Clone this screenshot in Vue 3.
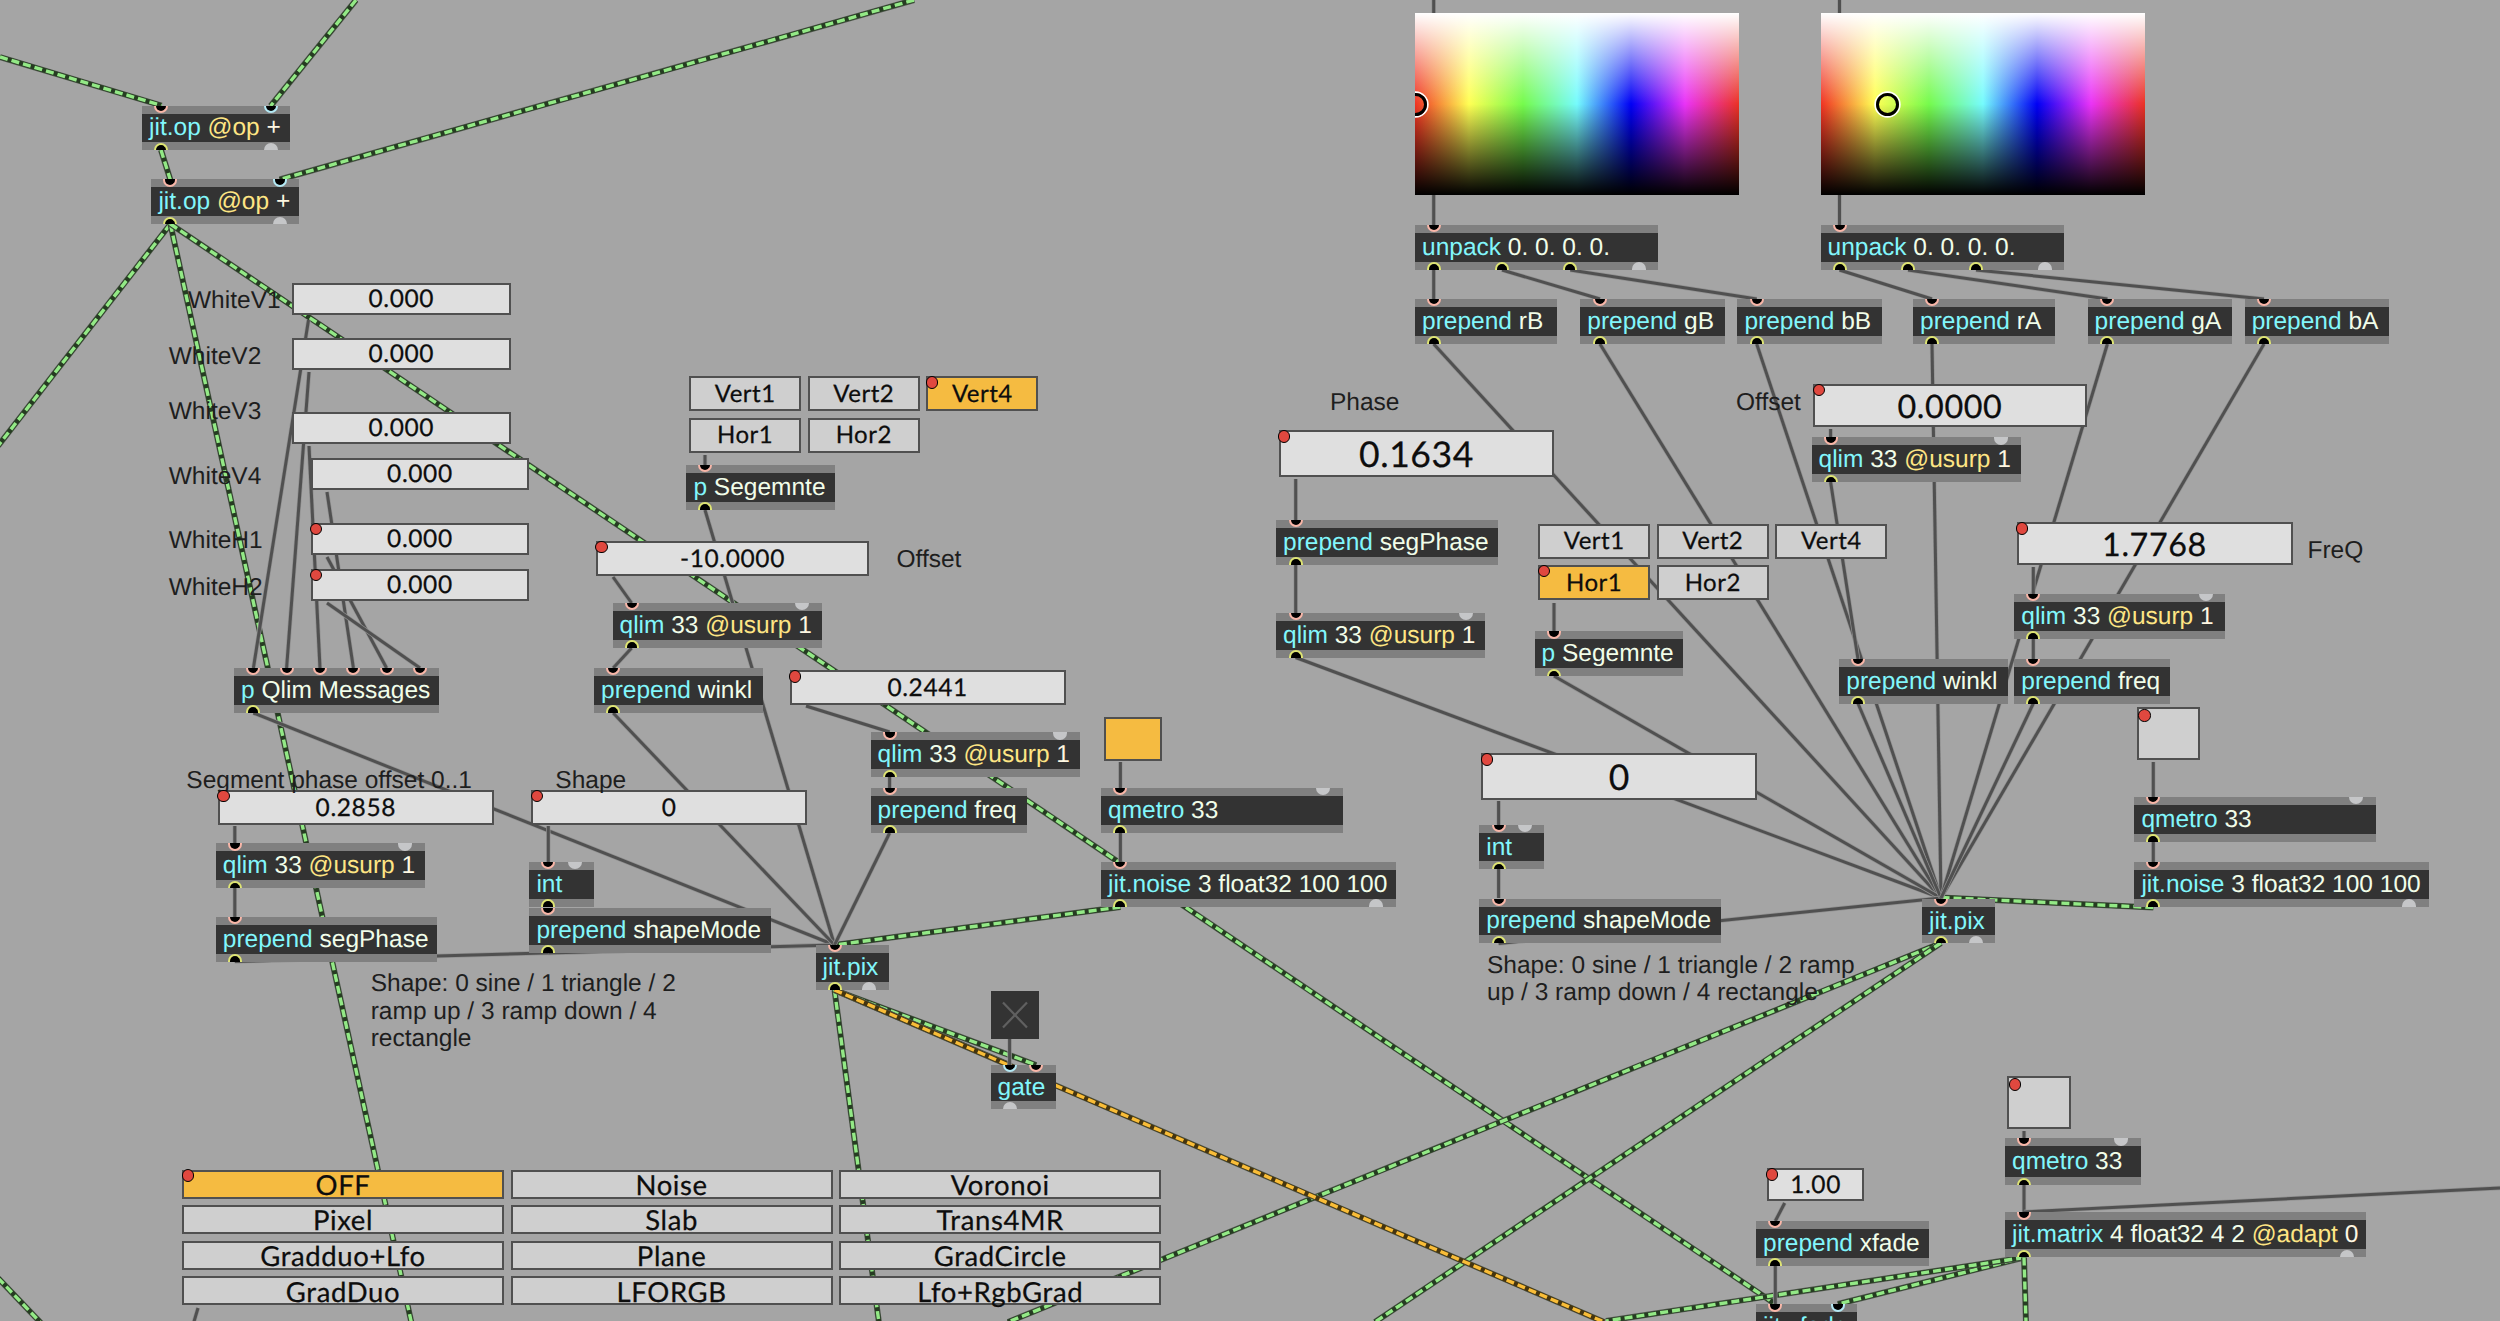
<script setup>
// object boxes: text, left, top, width, inlets and outlets as [x, kind]
const objects = [
  { text: 'jit.op @op +', x: 142, y: 105.5, w: 148, ins: [[161, 'hot'], [270.6, 'cold']], outs: [[161, 'out'], [270.6, 'idle']] },
  { text: 'jit.op @op +', x: 151.4, y: 179.3, w: 148, ins: [[170.4, 'hot'], [279.8, 'cold']], outs: [[170.4, 'out'], [279.8, 'idle']] },
  { text: 'p Qlim Messages', x: 234, y: 668, w: 205, ins: [[253.4, 'hot'], [286.6, 'hot'], [320, 'hot'], [353.4, 'hot'], [386.6, 'hot'], [420, 'hot']], outs: [[253.4, 'out']] },
  { text: 'qlim 33 @usurp 1', x: 215.8, y: 843.3, w: 209, ins: [[234.8, 'hot'], [405.3, 'idle']], outs: [[234.8, 'out']] },
  { text: 'prepend segPhase', x: 215.8, y: 917, w: 221.3, ins: [[234.8, 'hot']], outs: [[234.8, 'out']] },
  { text: 'int', x: 529.4, y: 862, w: 65, ins: [[548.3, 'hot'], [574.7, 'idle']], outs: [[548.3, 'out']] },
  { text: 'prepend shapeMode', x: 529.4, y: 908, w: 241.3, ins: [[548.3, 'hot']], outs: [[548.3, 'out']] },
  { text: 'p Segemnte', x: 686.4, y: 465, w: 148.2, ins: [[705, 'hot']], outs: [[705, 'out']] },
  { text: 'qlim 33 @usurp 1', x: 612.5, y: 603, w: 209, ins: [[631.6, 'hot'], [801.8, 'idle']], outs: [[631.6, 'out']] },
  { text: 'prepend winkl', x: 594, y: 668, w: 168.5, ins: [[613.2, 'hot']], outs: [[613.2, 'out']] },
  { text: 'qlim 33 @usurp 1', x: 870.6, y: 732.3, w: 209, ins: [[889.6, 'hot'], [1060, 'idle']], outs: [[889.6, 'out']] },
  { text: 'prepend freq', x: 870.6, y: 788, w: 156.2, ins: [[889.6, 'hot']], outs: [[889.6, 'out']] },
  { text: 'qmetro 33', x: 1101, y: 788, w: 242, ins: [[1120.4, 'hot'], [1323, 'idle']], outs: [[1120.4, 'out']] },
  { text: 'jit.noise 3 float32 100 100', x: 1101, y: 862, w: 294.5, ins: [[1120.4, 'hot']], outs: [[1120.4, 'out'], [1375.8, 'idle']] },
  { text: 'jit.pix', x: 815.5, y: 945, w: 73, ins: [[834.5, 'hot']], outs: [[834.5, 'out'], [868.5, 'idle']] },
  { text: 'gate', x: 990.6, y: 1064.7, w: 65, ins: [[1009.6, 'cold'], [1036, 'hot']], outs: [[1009.6, 'idle']] },
  { text: 'unpack 0. 0. 0. 0.', x: 1415, y: 225, w: 243, ins: [[1433.7, 'hot']], outs: [[1433.7, 'out'], [1502, 'out'], [1570.3, 'out'], [1638.6, 'idle']] },
  { text: 'unpack 0. 0. 0. 0.', x: 1820.5, y: 225, w: 243, ins: [[1839.5, 'hot']], outs: [[1839.5, 'out'], [1908, 'out'], [1976, 'out'], [2044.5, 'idle']] },
  { text: 'prepend rB', x: 1415, y: 299, w: 142, ins: [[1433.7, 'hot']], outs: [[1433.7, 'out']] },
  { text: 'prepend gB', x: 1580.3, y: 299, w: 144.5, ins: [[1600, 'hot']], outs: [[1600, 'out']] },
  { text: 'prepend bB', x: 1737.4, y: 299, w: 144.5, ins: [[1756.7, 'hot']], outs: [[1756.7, 'out']] },
  { text: 'prepend rA', x: 1913, y: 299, w: 142, ins: [[1932, 'hot']], outs: [[1932, 'out']] },
  { text: 'prepend gA', x: 2087.6, y: 299, w: 144.5, ins: [[2107.4, 'hot']], outs: [[2107.4, 'out']] },
  { text: 'prepend bA', x: 2244.7, y: 299, w: 144, ins: [[2264, 'hot']], outs: [[2264, 'out']] },
  { text: 'prepend segPhase', x: 1276, y: 520, w: 221.5, ins: [[1295.7, 'hot']], outs: [[1295.7, 'out']] },
  { text: 'qlim 33 @usurp 1', x: 1276, y: 613, w: 209.4, ins: [[1295.7, 'hot'], [1466, 'idle']], outs: [[1295.7, 'out']] },
  { text: 'p Segemnte', x: 1534.6, y: 631.3, w: 148, ins: [[1554, 'hot']], outs: [[1554, 'out']] },
  { text: 'int', x: 1479.3, y: 824.7, w: 65, ins: [[1498.6, 'hot'], [1525, 'idle']], outs: [[1498.6, 'out']] },
  { text: 'prepend shapeMode', x: 1479.3, y: 898.5, w: 241.7, ins: [[1498.6, 'hot']], outs: [[1498.6, 'out']] },
  { text: 'qlim 33 @usurp 1', x: 1811.5, y: 437.3, w: 209, ins: [[1830.6, 'hot'], [2001, 'idle']], outs: [[1830.6, 'out']] },
  { text: 'qlim 33 @usurp 1', x: 2014.3, y: 594, w: 211, ins: [[2033.3, 'hot'], [2205.8, 'idle']], outs: [[2033.3, 'out']] },
  { text: 'prepend winkl', x: 1839.3, y: 659, w: 168.4, ins: [[1858, 'hot']], outs: [[1858, 'out']] },
  { text: 'prepend freq', x: 2014.3, y: 659, w: 156.2, ins: [[2033.3, 'hot']], outs: [[2033.3, 'out']] },
  { text: 'qmetro 33', x: 2134.4, y: 797, w: 241.5, ins: [[2153.3, 'hot'], [2356, 'idle']], outs: [[2153.3, 'out']] },
  { text: 'jit.noise 3 float32 100 100', x: 2134.4, y: 862, w: 294.3, ins: [[2153.3, 'hot']], outs: [[2153.3, 'out'], [2409, 'idle']] },
  { text: 'jit.pix', x: 1922, y: 898.7, w: 73, ins: [[1941, 'hot']], outs: [[1941, 'out'], [1976, 'idle']] },
  { text: 'qmetro 33', x: 2005, y: 1138.3, w: 136, h: 46.7, ins: [[2024, 'hot'], [2121.4, 'idle']], outs: [[2024, 'out']] },
  { text: 'jit.matrix 4 float32 4 2 @adapt 0', x: 2005, y: 1212.3, w: 361, ins: [[2024, 'hot']], outs: [[2024, 'out'], [2347, 'idle']] },
  { text: 'prepend xfade', x: 1756, y: 1221, w: 172.6, ins: [[1775.3, 'hot']], outs: [[1775.3, 'out']] },
  { text: 'jit.xfade', x: 1756, y: 1304.3, w: 101, ins: [[1775.3, 'hot'], [1838, 'cold']], outs: [] }
]

const numbers = [
  { value: '0.000', x: 291.8, y: 283, w: 219, h: 32 },
  { value: '0.000', x: 291.8, y: 338, w: 219, h: 32 },
  { value: '0.000', x: 291.8, y: 412, w: 219, h: 32 },
  { value: '0.000', x: 310.6, y: 458, w: 218.6, h: 32 },
  { value: '0.000', x: 310.6, y: 522.7, w: 218.6, h: 32, dot: true },
  { value: '0.000', x: 310.6, y: 569, w: 218.6, h: 32, dot: true },
  { value: '0.2858', x: 218, y: 790, w: 275.6, h: 34.5, dot: true },
  { value: '0', x: 531.4, y: 790, w: 275.6, h: 34.5, dot: true },
  { value: '-10.0000', x: 596, y: 541, w: 273, h: 34.7, dot: true },
  { value: '0.2441', x: 789.6, y: 670.3, w: 276, h: 34.3, dot: true },
  { value: '0.1634', x: 1278.6, y: 430.3, w: 275.7, h: 46.7, size: 'large', dot: true },
  { value: '0', x: 1481.4, y: 753.3, w: 275.7, h: 46.5, size: 'large', dot: true },
  { value: '0.0000', x: 1813.4, y: 384, w: 273.2, h: 42.7, size: 'medium', dot: true },
  { value: '1.7768', x: 2016.5, y: 522.3, w: 276, h: 42.7, size: 'medium', dot: true },
  { value: '1.00', x: 1766.8, y: 1168.3, w: 97.5, h: 32.4, dot: true }
]

const tabs = [
  { x: 689, y: 376, size: 'small', active: 'Vert4', items: ['Vert1', 'Vert2', 'Vert4', 'Hor1', 'Hor2'] },
  { x: 1538, y: 523.5, size: 'small', active: 'Hor1', items: ['Vert1', 'Vert2', 'Vert4', 'Hor1', 'Hor2'] },
  {
    x: 182, y: 1169.5, size: 'wide', active: 'OFF',
    items: ['OFF', 'Noise', 'Voronoi', 'Pixel', 'Slab', 'Trans4MR', 'Gradduo+Lfo', 'Plane', 'GradCircle', 'GradDuo', 'LFORGB', 'Lfo+RgbGrad']
  }
]

const buttons = [
  { x: 1103.7, y: 716.5, w: 58, h: 44.5, on: true },
  { x: 2136.6, y: 707.3, w: 63.8, h: 53, dot: true },
  { x: 2007, y: 1076.3, w: 64.4, h: 52.7, dot: true }
]

const comments = [
  { lines: ['WhiteV1'], x: 188, y: 301 },
  { lines: ['WhiteV2'], x: 168.7, y: 356.5 },
  { lines: ['WhiteV3'], x: 168.7, y: 411.5 },
  { lines: ['WhiteV4'], x: 168.7, y: 476.3 },
  { lines: ['WhiteH1'], x: 168.7, y: 540.5 },
  { lines: ['WhiteH2'], x: 168.7, y: 587.3 },
  { lines: ['Segment phase offset 0..1'], x: 186.3, y: 780.5 },
  { lines: ['Shape'], x: 555.3, y: 780.5 },
  { lines: ['Shape: 0 sine / 1 triangle / 2', 'ramp up / 3 ramp down / 4', 'rectangle'], x: 370.7, y: 984 },
  { lines: ['Offset'], x: 896.5, y: 559.5 },
  { lines: ['Phase'], x: 1330, y: 402.5 },
  { lines: ['Offset'], x: 1736, y: 402.5 },
  { lines: ['FreQ'], x: 2307.5, y: 550.3 },
  { lines: ['Shape: 0 sine / 1 triangle / 2 ramp', 'up / 3 ramp down / 4 rectangle'], x: 1487, y: 965.5 }
]

const pickers = [
  { x: 1415, mark: 0 },
  { x: 1820.7, mark: 66.5 }
]

// patch cords as x1, y1, x2, y2
const cords = [
  [308.5, 320, 253.4, 668], [309, 372, 286.6, 668], [309, 446, 320, 668],
  [327, 492, 353.4, 668], [327, 557, 386.6, 668], [327, 603, 420, 668],
  [253.4, 713, 834.5, 945],
  [234.8, 826, 234.8, 843], [234.8, 888, 234.8, 917], [234.8, 961.5, 834.5, 945],
  [548.3, 826, 548.3, 862], [548.3, 953, 834.5, 945],
  [705, 455, 705, 465], [705, 510, 834.5, 945],
  [613, 577, 631.6, 603], [631.6, 648, 613.2, 668], [613.2, 713, 834.5, 945],
  [806, 706, 889.6, 732], [889.6, 777, 889.6, 788], [889.6, 833, 834.5, 945],
  [1120.4, 762, 1120.4, 788], [1120.4, 833, 1120.4, 862],
  [1009.6, 1039, 1009.6, 1065],
  [1433.7, 0, 1433.7, 225], [1839.5, 0, 1839.5, 225],
  [1433.7, 270, 1433.7, 299], [1502, 270, 1600, 299], [1570.3, 270, 1756.7, 299],
  [1839.5, 270, 1932, 299], [1908, 270, 2107.4, 299], [1976, 270, 2264, 299],
  [1433.7, 344, 1941, 898], [1600, 344, 1941, 898], [1756.7, 344, 1941, 898],
  [1932, 344, 1941, 898], [2107.4, 344, 1941, 898], [2264, 344, 1941, 898],
  [1295.7, 479, 1295.7, 520], [1295.7, 565, 1295.7, 613], [1295.7, 657.5, 1941, 898],
  [1554, 603, 1554, 631], [1554, 676, 1941, 898],
  [1498.6, 801, 1498.6, 825], [1498.6, 869, 1498.6, 898], [1498.6, 943.5, 1941, 898],
  [1830.6, 429, 1830.6, 437], [1830.6, 482, 1858, 659], [1858, 703.5, 1941, 898],
  [2033.3, 567, 2033.3, 594], [2033.3, 639, 2033.3, 659], [2033.3, 703.5, 1941, 898],
  [2153.3, 762, 2153.3, 797], [2153.3, 842, 2153.3, 862],
  [2024, 1131, 2024, 1138], [2024, 1185, 2024, 1212], [2024, 1212, 2500, 1188],
  [1784.7, 1203, 1775.3, 1221], [1775.3, 1266, 1775.3, 1304],
  [198, 1308, 193, 1325]
]

const matrixCords = [
  [0, 57, 161.5, 105.5], [356, 0, 270.6, 106], [914, 0, 279.8, 179.5], [161, 150, 170.4, 180],
  [170.4, 224, -2, 446], [170.4, 224, 411.5, 1323], [170.4, 224, 1775.3, 1304],
  [-2, 1278, 41, 1323],
  [1120.4, 907, 834.5, 945],
  [834.5, 990, 879, 1323], [834.5, 990, 1036, 1065],
  [2153.3, 907.5, 1941, 897.5],
  [1941, 943, 1008, 1322], [1941, 943, 1375, 1322],
  [2024, 1257.5, 1838, 1304], [2024, 1257.5, 1606, 1321], [2024, 1257.5, 2026, 1322]
]

const gateCords = [
  [834.5, 990, 1009.6, 1065], [834.5, 990, 1604, 1322]
]

const dots = [
  ...numbers.filter(n => n.dot).map(n => ({ x: n.x + 5.3, y: n.y + 6.2 })),
  ...buttons.filter(b => b.dot).map(b => ({ x: b.x + 7.7, y: b.y + 8 })),
  { x: 931.8, y: 382.3 },
  { x: 1543.8, y: 571.2 },
  { x: 187.7, y: 1175.5 }
]

function words(text) {
  let afterAttr = false
  return text.split(' ').map((word, i) => {
    let kind = 'arg'
    if (i === 0) kind = 'name'
    else if (word.startsWith('@')) {
      kind = 'attr'
      afterAttr = true
    } else if (afterAttr) kind = 'attr-value'
    return { word, kind }
  })
}

function box(b) {
  const style = { left: b.x + 'px', top: b.y + 'px' }
  if (b.w) style.width = b.w + 'px'
  if (b.h) style.height = b.h + 'px'
  return style
}

const line = c => `M${c[0]} ${c[1]}L${c[2]} ${c[3]}`
</script>

<template>
  <main class="patcher">
    <svg class="cords" width="2500" height="1321" viewBox="0 0 2500 1321">
      <g v-for="(c, i) in matrixCords" :key="'m' + i">
        <path class="sheath" :d="line(c)" />
        <path class="core green" :d="line(c)" />
        <path class="dash green" :d="line(c)" />
      </g>
      <g v-for="(c, i) in gateCords" :key="'g' + i">
        <path class="sheath" :d="line(c)" />
        <path class="core amber" :d="line(c)" />
        <path class="dash amber" :d="line(c)" />
      </g>
      <g v-for="(c, i) in cords" :key="'c' + i">
        <path class="halo" :d="line(c)" />
        <path class="cord" :d="line(c)" />
      </g>
    </svg>

    <div v-for="p in pickers" :key="p.x" class="swatch" :style="{ left: p.x + 'px' }">
      <span class="mark" :style="{ left: p.mark + 'px' }"></span>
    </div>

    <div v-for="(o, i) in objects" :key="'o' + i" class="object" :style="box(o)">
      <span v-for="p in o.ins" :key="p[0]" class="port inlet" :class="p[1]" :style="{ left: p[0] - o.x + 'px' }"></span>
      <div class="body"><span v-for="(t, k) in words(o.text)" :key="k" :class="t.kind">{{ t.word + ' ' }}</span></div>
      <span v-for="p in o.outs" :key="p[0]" class="port outlet" :class="p[1]" :style="{ left: p[0] - o.x + 'px' }"></span>
    </div>

    <div v-for="(n, i) in numbers" :key="'n' + i" class="number" :class="n.size" :style="box(n)">{{ n.value }}</div>

    <div v-for="(t, i) in tabs" :key="'t' + i" class="tabs" :class="t.size" :style="box(t)">
      <div v-for="item in t.items" :key="item" class="tab" :class="{ active: item === t.active }">{{ item }}</div>
    </div>

    <div v-for="(b, i) in buttons" :key="'b' + i" class="button" :class="{ on: b.on }" :style="box(b)"></div>

    <svg class="toggle" width="48" height="48" viewBox="0 0 48 48">
      <path d="M12 11.5L36 36.5M36 11.5L12 36.5" />
    </svg>

    <div v-for="(c, i) in comments" :key="'k' + i" class="comment" :style="{ left: c.x + 'px', top: c.y - 13.65 + 'px' }">
      <div v-for="l in c.lines" :key="l">{{ l }}</div>
    </div>

    <i v-for="(d, i) in dots" :key="'d' + i" class="dot" :style="box(d)"></i>
  </main>
</template>

<style>
body { margin: 0; background: #a5a5a5; }
</style>

<style scoped>
.patcher {
  position: relative;
  width: 2500px;
  height: 1321px;
  overflow: hidden;
  background: #a5a5a5;
  font-family: "Liberation Sans", Arial, sans-serif;
  font-size: 24.5px;
  text-rendering: geometricPrecision;
}

.cords { position: absolute; left: 0; top: 0; }
.cords path { fill: none; }
.halo { stroke: #929292; stroke-width: 4.4; }
.cord { stroke: #505050; stroke-width: 3; }
.sheath { stroke: #50584d; stroke-width: 6; }
.core { stroke-width: 4.8; }
.core.green { stroke: #263c22; }
.core.amber { stroke: #45350f; }
.dash { stroke-width: 3.4; stroke-dasharray: 8 4; }
.dash.green { stroke: #93e986; }
.dash.amber { stroke: #f9bd38; }

.swatch {
  position: absolute;
  top: 13.3px;
  width: 324px;
  height: 182px;
  overflow: hidden;
  background:
    linear-gradient(to bottom, #fff 0%, rgba(255, 255, 255, 0) 50%, rgba(0, 0, 0, 0) 50%, #000 100%),
    linear-gradient(to right, #f03323, #ffff54 16.67%, #75fb4c 33.33%, #75fbfd 50%, #0000f5 66.67%, #ea33f7 83.33%, #eb3223);
}
.mark {
  position: absolute;
  top: 91px;
  box-sizing: border-box;
  width: 23px;
  height: 23px;
  margin: -11.5px 0 0 -11.5px;
  border: 3.6px solid #000;
  border-radius: 50%;
  box-shadow: 0 0 0 1.7px #fff;
}

.object {
  position: absolute;
  display: flex;
  flex-direction: column;
  box-sizing: border-box;
  height: 44.7px;
  padding: 8px 0;
  background: #808080;
}
.body {
  flex: 1;
  display: flex;
  align-items: center;
  padding: 1px 0 0 7px;
  background: #333;
  white-space: pre;
  line-height: 26px;
}
.name { color: #82f6fb; }
.arg { color: #f1fde9; }
.attr { color: #fee584; }
.attr-value { color: #fef7e2; }

.port {
  position: absolute;
  box-sizing: border-box;
  width: 14px;
  height: 7.3px;
  margin-left: -7px;
  background: #000;
  border: 2px solid;
}
.inlet { top: 0; border-top: 0; border-radius: 0 0 7px 7px; }
.outlet { bottom: 0; border-bottom: 0; border-radius: 7px 7px 0 0; }
.hot { border-color: #f9b6a8; }
.cold { border-color: #b3e9f5; }
.out { border-color: #dfe573; }
.idle { border-color: #c5c6c8; background: #c5c6c8; }

.number, .tab {
  box-sizing: border-box;
  display: flex;
  align-items: center;
  justify-content: center;
  border: 2px solid #505050;
  color: #0d0d0d;
  font-family: Lato, sans-serif;
  -webkit-text-stroke: 0.25px #0d0d0d;
  white-space: nowrap;
}
.number { position: absolute; padding-top: 1px; background: #dfdfdf; font-size: 24.5px; letter-spacing: 0.6px; line-height: 1; }
.number.medium { font-size: 32.3px; }
.number.large { font-size: 35.5px; }

.tabs { position: absolute; display: grid; }
.tabs.small { grid-template-columns: repeat(3, 112.3px); grid-auto-rows: 35.2px; gap: 6.4px 6.3px; font-size: 24px; }
.tabs.wide { grid-template-columns: repeat(3, 322px); grid-auto-rows: 29.2px; gap: 6.4px 6.6px; font-size: 27.5px; }
.tab { background: #cfcfcf; letter-spacing: 0.5px; line-height: 1; }
.tabs.wide .tab { padding-top: 1px; letter-spacing: 0.6px; }
.tab.active { background: #f5bb41; }

.button { position: absolute; box-sizing: border-box; border: 2px solid #505050; background: #cfcfcf; }
.button.on { background: #f5bb41; }

.toggle { position: absolute; left: 990.6px; top: 991px; background: #333; }
.toggle path { stroke: #606060; stroke-width: 2.2; }

.comment { position: absolute; color: #1e1e1e; line-height: 27.3px; white-space: nowrap; }

.dot {
  position: absolute;
  box-sizing: border-box;
  width: 12.4px;
  height: 12.4px;
  margin: -6.2px 0 0 -6.2px;
  border: 1.6px solid #000;
  border-radius: 50%;
  background: #e0483f;
}
</style>
